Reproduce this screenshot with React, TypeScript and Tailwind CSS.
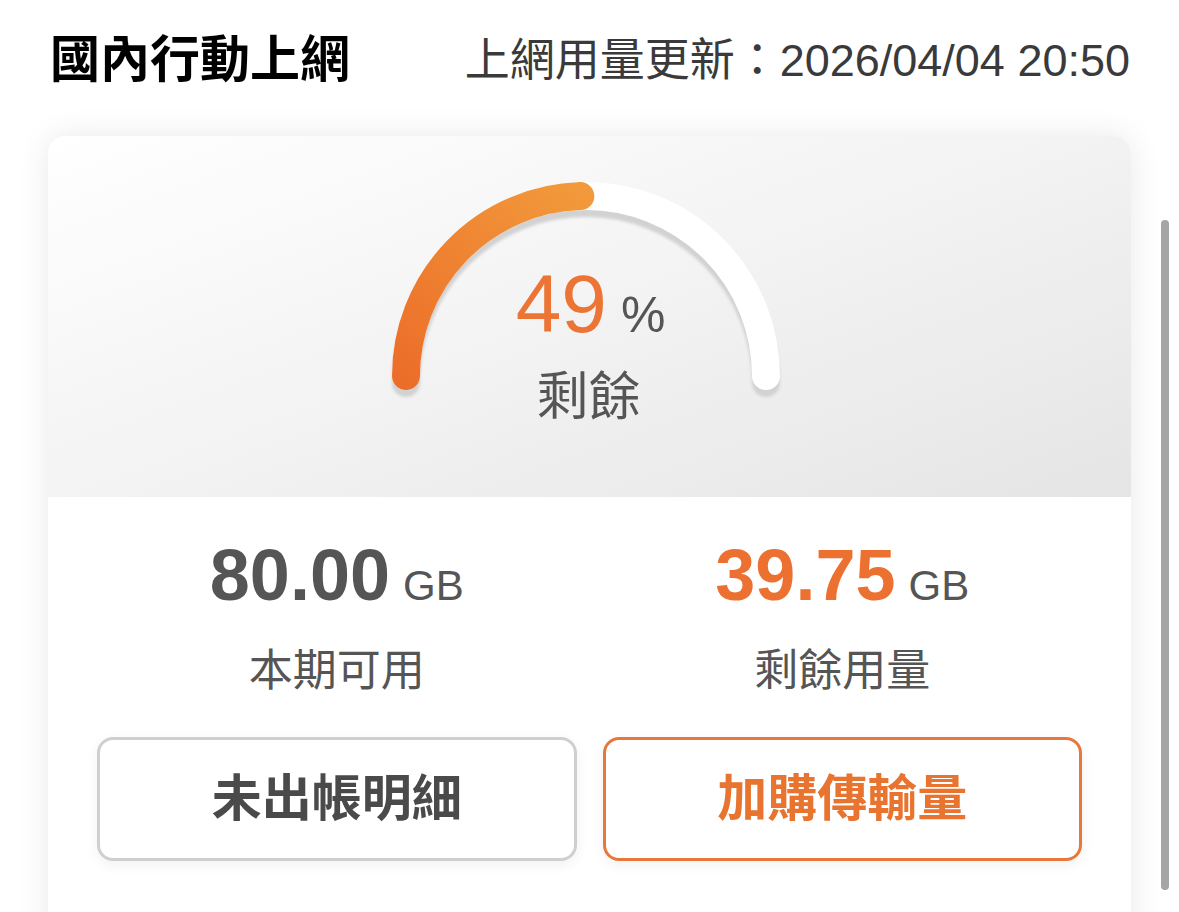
import React from "react";

const latin = "font-['Liberation_Sans','Noto_Sans_CJK_TC',sans-serif]";

function Gauge({ percent }: { percent: number }) {
  const cx = 210;
  const cy = 210;
  const r = 180;
  const angle = Math.PI - (percent / 100) * Math.PI;
  const ex = cx + r * Math.cos(angle);
  const ey = cy - r * Math.sin(angle);

  return (
    <svg width="420" height="250" viewBox="0 0 420 250" className="absolute left-0 top-0">
      <defs>
        <linearGradient id="orange" gradientUnits="userSpaceOnUse" x1="30" y1="220" x2="210" y2="30">
          <stop offset="0" stopColor="#ec6d29" />
          <stop offset="1" stopColor="#f29a3b" />
        </linearGradient>
        <filter id="soft" x="-10%" y="-10%" width="120%" height="130%">
          <feGaussianBlur stdDeviation="1.5" />
        </filter>
      </defs>
      <path
        d={`M ${cx - r} ${cy} A ${r} ${r} 0 0 1 ${cx + r} ${cy}`}
        fill="none"
        stroke="#d2d2d2"
        strokeWidth="28"
        strokeLinecap="round"
        transform="translate(0 7)"
        filter="url(#soft)"
      />
      <path
        d={`M ${cx - r} ${cy} A ${r} ${r} 0 0 1 ${cx + r} ${cy}`}
        fill="none"
        stroke="#ffffff"
        strokeWidth="28"
        strokeLinecap="round"
      />
      <path
        d={`M ${cx - r} ${cy} A ${r} ${r} 0 0 1 ${ex} ${ey}`}
        fill="none"
        stroke="url(#orange)"
        strokeWidth="28"
        strokeLinecap="round"
      />
    </svg>
  );
}

export default function App() {
  return (
    <div className="relative h-[912px] w-[1179px] overflow-hidden bg-white font-['Noto_Sans_CJK_TC',sans-serif]">
      <div className="flex h-[120px] items-center justify-between pl-[50px] pr-[49px]">
        <h1 className="mb-[10px] text-[50px] font-bold leading-none text-black">國內行動上網</h1>
        <div className={`${latin} text-[45px] leading-none text-[#3a3a3a]`}>上網用量更新：2026/04/04 20:50</div>
      </div>

      <div className="mx-[48px] mt-[16px] overflow-hidden rounded-[18px] bg-white shadow-[0_0_32px_rgba(0,0,0,0.09)]">
        <div className="h-[361px] bg-[linear-gradient(160deg,#ffffff_0%,#f4f4f4_45%,#e5e5e5_100%)] pt-[30px]">
          <div className="relative mx-auto h-[250px] w-[420px] -translate-x-[4px]">
            <Gauge percent={49} />
            <div className="absolute inset-x-0 top-[97px] flex translate-x-[3px] flex-col items-center">
              <div className={`${latin} flex items-baseline gap-[14px] pl-[4px]`}>
                <span className="text-[82px] leading-[82px] text-[#ec7535]">49</span>
                <span className="text-[50px] leading-[82px] text-[#555555]">%</span>
              </div>
              <div className="mt-[11px] text-[52px] leading-[52px] text-[#555555]">剩餘</div>
            </div>
          </div>
        </div>

        <div className="h-[520px] bg-white px-[49px] pt-[42px]">
          <div className="grid grid-cols-2 gap-x-[26px]">
            <div className="flex flex-col items-center">
              <div className={`${latin} flex items-baseline gap-[13px]`}>
                <span className="text-[72px] font-bold leading-[72px] text-[#555555]">80.00</span>
                <span className="text-[42px] leading-[72px] text-[#555555]">GB</span>
              </div>
              <div className="mt-[23px] text-[44px] leading-[44px] text-[#555555]">本期可用</div>
            </div>
            <div className="flex flex-col items-center">
              <div className={`${latin} flex items-baseline gap-[13px]`}>
                <span className="text-[72px] font-bold leading-[72px] text-[#ec7030]">39.75</span>
                <span className="text-[42px] leading-[72px] text-[#555555]">GB</span>
              </div>
              <div className="mt-[23px] text-[44px] leading-[44px] text-[#555555]">剩餘用量</div>
            </div>

            <button className="mt-[48px] flex h-[124px] items-center justify-center rounded-[16px] border-[3px] border-[#cfcfcf] bg-white pb-[10px] text-[50px] font-bold text-[#4a4a4a] shadow-[0_4px_14px_rgba(0,0,0,0.06)]">
              未出帳明細
            </button>
            <button className="mt-[48px] flex h-[124px] items-center justify-center rounded-[16px] border-[3px] border-[#e8773a] bg-white pb-[10px] text-[50px] font-bold text-[#e8742f] shadow-[0_4px_14px_rgba(0,0,0,0.06)]">
              加購傳輸量
            </button>
          </div>
        </div>
      </div>

      <div className="absolute left-[1161px] top-[220px] h-[670px] w-[8px] rounded-full bg-[#a5a5a5]" />
    </div>
  );
}
